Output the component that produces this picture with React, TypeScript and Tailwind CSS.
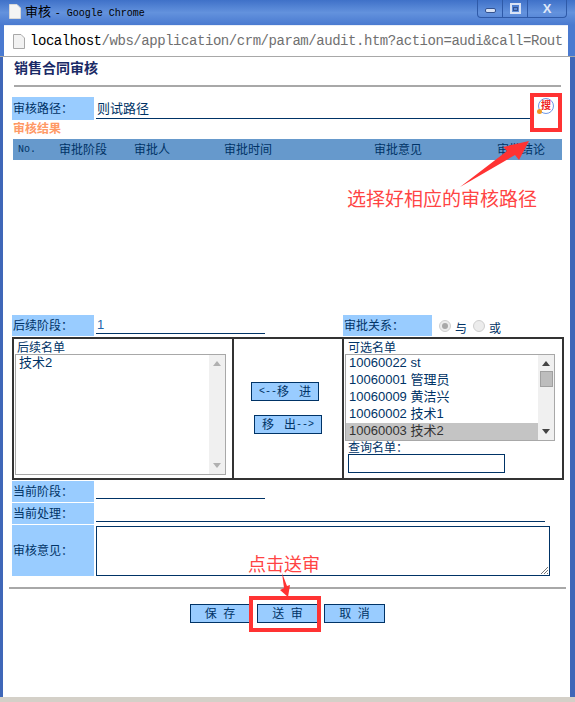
import type { ReactNode } from 'react';

const cjk = "font-['Liberation_Sans','Noto_Sans_CJK_SC',sans-serif]";
const mono = "font-['Liberation_Mono',monospace]";

function Label({ text, className }: { text: string; className: string }) {
  return <div className={`flex items-center bg-[#99ccff] pl-[1px] text-[12px] leading-none text-[#003366] ${className}`}>{text}</div>;
}

function BlueButton({ children, className }: { children: ReactNode; className: string }) {
  return (
    <button className={`flex h-[19px] items-center justify-center whitespace-pre border border-[#003366] bg-[#99ccff] text-[12px] leading-none text-[#003366] ${className}`}>
      {children}
    </button>
  );
}

function ScrollBar({ dark, thumb }: { dark?: boolean; thumb?: boolean }) {
  const c = dark ? 'text-[#444444]' : 'text-[#b0b0b0]';
  return (
    <div className="flex w-[16px] flex-col items-center justify-between bg-[#f0f0f0] py-[6px]">
      <div className="flex flex-col items-center gap-[5px]">
        <svg width="8" height="5" viewBox="0 0 8 5" className={c}><path d="M4 0 8 5H0Z" fill="currentColor" /></svg>
        {thumb && <div className="h-[16px] w-[13px] border border-[#a0a0a0] bg-[#bdbdbd]" />}
      </div>
      <svg width="8" height="5" viewBox="0 0 8 5" className={c}><path d="M4 5 8 0H0Z" fill="currentColor" /></svg>
    </div>
  );
}

function Radio({ checked }: { checked?: boolean }) {
  return (
    <div className="flex h-[12px] w-[12px] items-center justify-center rounded-full border border-[#cfcfcf] bg-[#ececec]">
      {checked && <div className="h-[6px] w-[6px] rounded-full bg-[#a8a8a8]" />}
    </div>
  );
}

const candidates = ['10060022 st', '10060001 管理员', '10060009 黄洁兴', '10060002 技术1', '10060003 技术2'];

export default function App() {
  return (
    <div className={`relative flex h-[702px] w-[575px] flex-col overflow-hidden bg-white ${cjk}`}>
      {/* title bar */}
      <div className="flex h-[25px] items-start bg-gradient-to-b from-[#3f71c8] via-[#6392dd] to-[#4a7ad0] pl-[9px] pr-[8px]">
        <svg width="12" height="15" viewBox="0 0 12 15" className="mt-[4px]">
          <path d="M.5.5H8L11.5 4V14.5H.5Z" fill="#f4f4f4" stroke="#d8d8d8" />
        </svg>
        <div className="ml-[4px] mt-[4px] whitespace-pre text-[13px] leading-[15px] text-black">
          审核 <span className={`${mono} text-[10px]`}>- Google Chrome</span>
        </div>
        <div className="ml-auto flex h-[18px] w-[90px] rounded-b-[4px] border border-t-0 border-[#2f5aa8] text-[#dfe8f8]">
          <div className="flex w-[25px] items-end justify-center border-r border-[#2f5aa8] pb-[4px]">
            <div className="h-[5px] w-[11px] rounded-[2px] border border-[#33528f] bg-[#d9e3f5]" />
          </div>
          <div className="flex w-[25px] items-center justify-center border-r border-[#2f5aa8]">
            <div className="flex h-[11px] w-[11px] items-center justify-center border-2 border-[#d9e3f5]">
              <div className="h-[4px] w-[5px] border border-[#33528f]" />
            </div>
          </div>
          <div className="flex flex-1 items-center justify-center text-[13px] font-bold leading-none">X</div>
        </div>
      </div>

      {/* address bar */}
      <div className="flex h-[32px] border-b border-[#a8a8a8] bg-[#4a7ad0] pl-[4px] pr-[7px]">
        <div className={`flex flex-1 items-center overflow-hidden whitespace-nowrap border-t border-[#e8eef8] bg-white pl-[9px] ${mono} text-[14px] leading-none tracking-[-0.45px]`}>
          <svg width="12" height="15" viewBox="0 0 12 15" className="mr-[5px] shrink-0">
            <path d="M.5.5H8L11.5 4V14.5H.5Z" fill="#f2f2f2" stroke="#a8a8a8" />
          </svg>
          <span className="text-black">localhost</span>
          <span className="text-[#707070]">/wbs/application/crm/param/audit.htm?action=audi&amp;call=Rout</span>
        </div>
      </div>

      {/* page */}
      <div className="flex flex-1 border-b-[5px] border-b-[#d4d0c8]">
        <div className="w-[3px] bg-[#3f67b8]" />
        <div className="flex flex-1 flex-col bg-white pl-[9px]">
          <div className="h-[28px] pl-[2px] pt-[3px] text-[14px] font-bold leading-[17px] text-[#1a2a66]">销售合同审核</div>
          <div className="ml-[2px] h-[2px] w-[547px] bg-[#a8a8a8]" />

          <div className="mt-[10px] flex h-[23px] w-[549px]">
            <Label text="审核路径：" className="w-[82px]" />
            <div className="ml-[2px] h-[22px] w-[434px] border-b border-[#003366] pl-[1px] pt-[5px] text-[13px] leading-[14px] text-[#003366]">则试路径</div>
            <div className="relative ml-[8px] mt-[1px] flex h-[16px] w-[16px] items-center justify-center rounded-full border border-[#6d98e8] text-[10px] font-bold leading-none text-[#ee2222]">
              搜
              <div className="absolute bottom-[-1px] left-[-2px] h-[5px] w-[5px] rounded-full bg-[#ee9922]" />
            </div>
          </div>

          <div className="h-[19px] pl-[1px] pt-[2px] text-[12px] font-bold leading-[14px] text-[#ff9966]">审核结果</div>

          <div className="ml-[1px] flex h-[21px] w-[549px] items-center bg-[#6699cc] text-[12px] leading-none text-[#003366]">
            <div className={`w-[46px] pl-[5px] ${mono} text-[10px]`}>No.</div>
            <div className="w-[75px]">审批阶段</div>
            <div className="w-[90px]">审批人</div>
            <div className="w-[150px]">审批时间</div>
            <div className="w-[123px]">审批意见</div>
            <div>审批结论</div>
          </div>

          <div className="h-[155px]" />

          <div className="flex h-[22px]">
            <Label text="后续阶段：" className="h-[21px] w-[82px]" />
            <div className="ml-[2px] h-[19px] w-[169px] border-b border-[#003366] pl-[1px] pt-[2px] text-[13px] leading-[15px] text-[#2266aa]">1</div>
            <Label text="审批关系：" className="ml-[78px] h-[21px] w-[89px]" />
            <div className="ml-[7px] flex items-start pt-[5px] text-[12px] leading-[14px] text-[#003366]">
              <Radio checked />
              <span className="ml-[4px] mt-[2px]">与</span>
              <div className="ml-[6px]"><Radio /></div>
              <span className="ml-[4px] mt-[2px]">或</span>
            </div>
          </div>

          {/* transfer box */}
          <div className="flex h-[143px] w-[552px] border-2 border-[#333333] text-[12px] leading-none text-[#003366]">
            <div className="flex w-[220px] flex-col border-r-2 border-[#333333] pl-[1px]">
              <div className="h-[15px] pl-[2px] pt-[3px]">后续名单</div>
              <div className="flex h-[121px] w-[211px] border border-[#a8a8a8]">
                <div className="flex-1 pl-[3px] pt-[1px] text-[13px] leading-[14px]">技术2</div>
                <ScrollBar />
              </div>
            </div>
            <div className="flex w-[110px] flex-col border-r-2 border-[#333333] pl-[17px] pt-[43px]">
              <BlueButton className="w-[68px]">
                <span className={`${mono} text-[10px]`}>{'<--'}</span>移{'   '}进
              </BlueButton>
              <BlueButton className="ml-[3px] mt-[14px] w-[68px]">
                移{'   '}出<span className={`${mono} text-[10px]`}>{'-->'}</span>
              </BlueButton>
            </div>
            <div className="flex flex-1 flex-col pl-[1px]">
              <div className="h-[15px] pl-[3px] pt-[3px]">可选名单</div>
              <div className="flex h-[87px] w-[210px] border border-[#a8a8a8]">
                <div className="flex-1 text-[13px]">
                  {candidates.map((c, i) => (
                    <div key={c} className={`h-[17px] pl-[3px] leading-[16px] ${i === 4 ? 'bg-[#c4c4c4] text-[#333333]' : ''}`}>{c}</div>
                  ))}
                </div>
                <ScrollBar dark thumb />
              </div>
              <div className="h-[13px] pl-[3px] pt-[1px]">查询名单：</div>
              <div className="ml-[3px] h-[19px] w-[157px] border border-[#003366]" />
            </div>
          </div>

          {/* current state rows */}
          <div className="mt-[1px] flex h-[22px]">
            <Label text="当前阶段：" className="h-[21px] w-[82px]" />
            <div className="ml-[2px] h-[18px] w-[169px] border-b border-[#003366]" />
          </div>
          <div className="flex h-[22px]">
            <Label text="当前处理：" className="h-[21px] w-[82px]" />
            <div className="ml-[2px] h-[19px] w-[449px] border-b border-[#003366]" />
          </div>
          <div className="flex h-[51px]">
            <Label text="审核意见：" className="w-[82px]" />
            <div className="relative ml-[2px] mt-[1px] h-[50px] w-[454px] border border-[#003366]">
              <svg width="9" height="9" viewBox="0 0 9 9" className="absolute bottom-0 right-0 text-[#777777]">
                <path d="M1 8 8 1M4 8 8 4M7 8 8 7" stroke="currentColor" fill="none" />
              </svg>
            </div>
          </div>

          <div className="ml-[-3px] mt-[11px] h-[2px] w-[557px] bg-[#a8a8a8]" />

          <div className="ml-[178px] mt-[15px] flex">
            <BlueButton className="w-[60px]">保  存</BlueButton>
            <BlueButton className="ml-[7px] w-[61px]">送  审</BlueButton>
            <BlueButton className="ml-[6px] w-[61px]">取  消</BlueButton>
          </div>
        </div>
        <div className="w-[5px] bg-[#3f67b8]" />
      </div>

      {/* annotations over the screenshot */}
      <div className="absolute left-[530px] top-[93px] h-[39px] w-[32px] border-4 border-[#ff3333]" />
      <div className="absolute left-[249px] top-[596px] h-[36px] w-[72px] border-4 border-[#ff3333]" />
      <div className="absolute left-[347px] top-[189px] text-[19px] leading-[22px] text-[#ff4444]">选择好相应的审核路径</div>
      <div className="absolute left-[248px] top-[554px] text-[18px] leading-[22px] text-[#ff4444]">点击送审</div>
      <svg width="575" height="702" className="pointer-events-none absolute left-0 top-0">
        <polygon points="460,187 507,151 503,147 529,141 519,160 515,155" fill="#ff3333" />
        <polygon points="282,573 287,586 290,585 288,597 280,590 284,588" fill="#ff3333" />
      </svg>
    </div>
  );
}
